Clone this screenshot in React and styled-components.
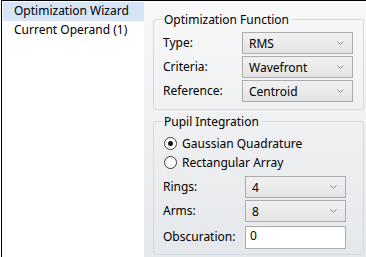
import React from 'react';
import styled, { createGlobalStyle } from 'styled-components';

const GlobalStyle = createGlobalStyle`
  html, body {
    margin: 0;
    padding: 0;
    background: #fff;
  }
  body {
    font-family: "Noto Sans", "Open Sans", sans-serif;
    font-size: 12px;
    color: #000;
  }
`;

const StyledWindow = styled.div`
  display: flex;
  width: 365px;
  height: 256px;
  margin-left: 1px;
  border-top: 1px solid #000;
  border-left: 1px solid #000;
  overflow: hidden;
`;

const StyledNav = styled.ul`
  list-style: none;
  margin: 0;
  padding: 1px 0 0 1px;
  width: 141px;
  flex-shrink: 0;
  background: #fff;
`;

const StyledNavItem = styled.li`
  height: 19px;
  line-height: 18px;
  padding-left: 11px;
  white-space: nowrap;
  background: ${({ $active }) => ($active ? '#d7e4f6' : 'transparent')};
`;

const StyledPanel = styled.div`
  flex: 1;
  display: flex;
  flex-direction: column;
  gap: 3px;
  padding: 10px 3px 0 9px;
  background: linear-gradient(#f8f8f9, #e5e8eb);
`;

const StyledGroup = styled.fieldset`
  margin: 0;
  padding: ${({ $padTop }) => $padTop}px ${({ $padRight }) => $padRight}px
    ${({ $padBottom }) => $padBottom}px 8px;
  border: 1px solid #d3dbe1;
  border-radius: 3px;

  legend {
    padding: 0 3px 0 2px;
    line-height: 17px;
  }
`;

const StyledForm = styled.div`
  display: grid;
  grid-template-columns: ${({ $labelWidth }) => $labelWidth}px ${({ $fieldWidth }) => $fieldWidth}px;
  row-gap: 2px;
  align-items: center;
`;

const StyledLabel = styled.span`
  padding-left: 1px;
  line-height: 18px;
`;

const StyledSelect = styled.div`
  display: flex;
  align-items: center;
  justify-content: space-between;
  height: 20px;
  padding: 0 8px 0 6px;
  border: 1px solid #acacac;
  background: linear-gradient(#f1f1f1, #e4e4e4);

  svg {
    flex-shrink: 0;
  }
`;

const StyledInput = styled.div`
  height: 21px;
  margin-top: 2px;
  padding: 0 4px;
  line-height: 17px;
  border: 1px solid #acacac;
  background: #fff;
`;

const StyledRadios = styled.div`
  display: flex;
  flex-direction: column;
  gap: 4px;
  padding: 4px 0 6px 2px;
`;

const StyledRadio = styled.label`
  display: flex;
  align-items: center;
  gap: 3px;
  height: 15px;
`;

const StyledDot = styled.span`
  width: 11px;
  height: 11px;
  border: 1px solid #3c3c3c;
  border-radius: 50%;
  background: #fff;
  display: flex;
  align-items: center;
  justify-content: center;
  margin-right: 2px;

  &::after {
    content: '';
    width: 5px;
    height: 5px;
    border-radius: 50%;
    background: ${({ $checked }) => ($checked ? '#111' : 'transparent')};
  }
`;

const Chevron = () => (
  <svg width="7" height="4" viewBox="0 0 7 4">
    <polyline points="0.5,0.5 3.5,3.2 6.5,0.5" fill="none" stroke="#8a8a8a" strokeWidth="1" />
  </svg>
);

const Select = ({ value }) => (
  <StyledSelect>
    <span>{value}</span>
    <Chevron />
  </StyledSelect>
);

const Radio = ({ checked, children }) => (
  <StyledRadio>
    <StyledDot $checked={checked} />
    {children}
  </StyledRadio>
);

const App = () => (
  <>
    <GlobalStyle />
    <StyledWindow>
      <StyledNav>
        <StyledNavItem $active>Optimization Wizard</StyledNavItem>
        <StyledNavItem>Current Operand (1)</StyledNavItem>
      </StyledNav>

      <StyledPanel>
        <StyledGroup $padTop={4} $padRight={8} $padBottom={7}>
          <legend>Optimization Function</legend>
          <StyledForm $labelWidth={80} $fieldWidth={111}>
            <StyledLabel>Type:</StyledLabel>
            <Select value="RMS" />
            <StyledLabel>Criteria:</StyledLabel>
            <Select value="Wavefront" />
            <StyledLabel>Reference:</StyledLabel>
            <Select value="Centroid" />
          </StyledForm>
        </StyledGroup>

        <StyledGroup $padTop={2} $padRight={16} $padBottom={5}>
          <legend>Pupil Integration</legend>
          <StyledRadios>
            <Radio checked>Gaussian Quadrature</Radio>
            <Radio>Rectangular Array</Radio>
          </StyledRadios>
          <StyledForm $labelWidth={83} $fieldWidth={101}>
            <StyledLabel>Rings:</StyledLabel>
            <Select value="4" />
            <StyledLabel>Arms:</StyledLabel>
            <Select value="8" />
            <StyledLabel>Obscuration:</StyledLabel>
            <StyledInput>0</StyledInput>
          </StyledForm>
        </StyledGroup>
      </StyledPanel>
    </StyledWindow>
  </>
);

export default App;
